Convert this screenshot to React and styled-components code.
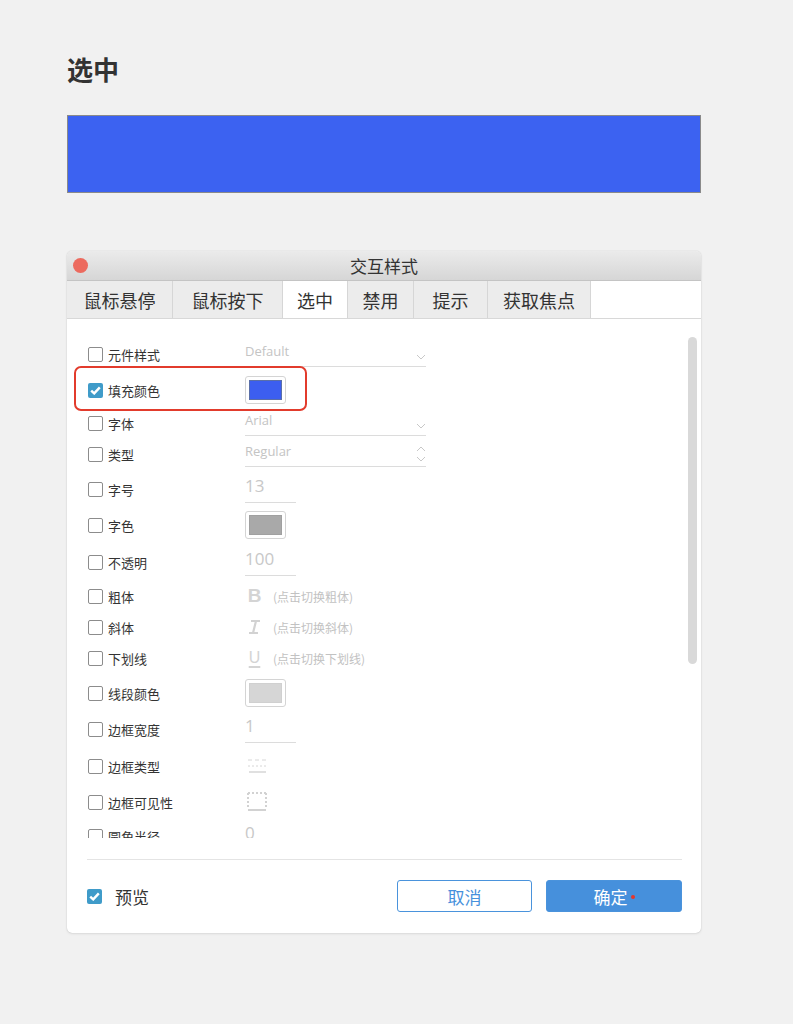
import styled, { createGlobalStyle } from 'styled-components';

const GlobalStyle = createGlobalStyle`
  html, body {
    margin: 0;
    padding: 0;
    background: #f1f1f1;
  }
  body {
    font-family: "Noto Sans CJK SC", "Noto Sans", "Liberation Sans", sans-serif;
    color: #333;
  }
`;

const Page = styled.div`
  width: 793px;
  min-height: 1024px;
  padding: 52px 0 0 67px;
  box-sizing: border-box;
`;

const Heading = styled.h1`
  margin: 0;
  font-size: 26px;
  line-height: 34px;
  font-weight: 700;
  color: #333;
`;

const PreviewBar = styled.div`
  width: 634px;
  height: 78px;
  margin-top: 29px;
  box-sizing: border-box;
  background: #3c62f1;
  border: 1px solid #8a8a8a;
`;

const Dialog = styled.div`
  width: 634px;
  margin-top: 58px;
  background: #fff;
  border-radius: 5px;
  box-shadow: 0 0 1px rgba(0, 0, 0, 0.25), 0 1px 3px rgba(0, 0, 0, 0.08);
  overflow: hidden;
`;

const TitleBar = styled.div`
  position: relative;
  height: 29px;
  display: flex;
  align-items: center;
  justify-content: center;
  background: linear-gradient(#ebebeb, #d6d6d6);
  border-bottom: 1px solid #c4c4c4;
  font-size: 17px;
  color: #333;
`;

const CloseDot = styled.span`
  position: absolute;
  left: 6px;
  top: 7px;
  width: 15px;
  height: 15px;
  border-radius: 50%;
  background: #ec6a5e;
`;

const Tabs = styled.div`
  display: flex;
  height: 38px;
  border-bottom: 1px solid #d8d8d8;
  box-sizing: border-box;
`;

const Tab = styled.div`
  width: ${(p) => p.w}px;
  display: flex;
  align-items: center;
  justify-content: center;
  box-sizing: border-box;
  border-right: 1px solid #d6d6d6;
  background: ${(p) => (p.active ? '#fff' : '#ececec')};
  font-size: 18px;
  color: #333;
`;

const Body = styled.div`
  position: relative;
  height: 519px;
  overflow: hidden;
  padding: 21px 0 0 21px;
  box-sizing: border-box;
`;

const ScrollThumb = styled.div`
  position: absolute;
  right: 4px;
  top: 18px;
  width: 9px;
  height: 327px;
  border-radius: 5px;
  background: #d9d9d9;
`;

/* each row: a 28px line, then the gap down to the next row */
const Row = styled.div`
  position: relative;
  height: 28px;
  margin-bottom: ${(p) => p.gap}px;
  display: flex;
  align-items: center;
`;

const Highlight = styled.div`
  position: absolute;
  left: -14px;
  top: -10px;
  width: 233px;
  height: 45px;
  box-sizing: border-box;
  border: 2px solid #e23b2c;
  border-radius: 7px;
`;

const Check = styled.span`
  width: 15px;
  height: 15px;
  box-sizing: border-box;
  border: ${(p) => (p.checked ? 'none' : '1px solid #8c8c8c')};
  border-radius: 2px;
  background: ${(p) => (p.checked ? '#3f9bc9' : '#fff')};
  display: inline-flex;
  align-items: center;
  justify-content: center;
  flex-shrink: 0;
`;

const Label = styled.span`
  width: 137px;
  margin-left: 5px;
  font-size: 13px;
  color: #333;
`;

const Select = styled.div`
  width: 181px;
  height: 22px;
  margin-top: 2px;
  border-bottom: 1px solid #dcdcdc;
  display: flex;
  align-items: flex-start;
  justify-content: space-between;
  font-family: "Open Sans", "Liberation Sans", sans-serif;
  font-size: 13px;
  line-height: 14px;
  color: #c4c4c4;
  svg {
    margin-top: ${(p) => (p.spin ? 0 : 10)}px;
  }
`;

const SpinArrows = styled.span`
  display: flex;
  flex-direction: column;
  gap: 4px;
  margin-top: 2px;
`;

const Swatch = styled.div`
  width: 41px;
  height: 28px;
  box-sizing: border-box;
  border: 1px solid #d4d4d4;
  border-radius: 3px;
  padding: 3px;
  background: #fff;
  div {
    width: 100%;
    height: 100%;
    box-sizing: border-box;
    background: ${(p) => p.color};
    border: 1px solid ${(p) => p.edge};
  }
`;

const NumInput = styled.div`
  width: 51px;
  height: 25px;
  margin-top: 2px;
  border-bottom: 1px solid #dcdcdc;
  font-family: "Open Sans", "Liberation Sans", sans-serif;
  font-size: 17px;
  line-height: 18px;
  color: #c8c8c8;
`;

const Toggle = styled.div`
  display: flex;
  align-items: center;
  gap: 9px;
  color: #cfcfcf;
`;

const Glyph = styled.span`
  width: 19px;
  display: inline-flex;
  justify-content: center;
  font-family: "Liberation Sans", sans-serif;
  font-size: 19px;
  font-weight: 700;
  line-height: 20px;
  color: #d4d4d4;
`;

const UnderGlyph = styled(Glyph)`
  font-size: 16px;
  font-weight: 400;
  text-decoration: underline;
  text-decoration-thickness: 2px;
  text-underline-offset: 3px;
`;

const Hint = styled.span`
  font-size: 12px;
  color: #c2c2c2;
`;

const Footer = styled.div`
  margin: 21px 19px 0 20px;
  padding: 20px 0 21px 0;
  border-top: 1px solid #e4e4e4;
  display: flex;
  align-items: center;
`;

const PreviewLabel = styled.span`
  margin-left: 13px;
  font-size: 17px;
  color: #333;
`;

const Buttons = styled.div`
  margin-left: auto;
  display: flex;
  gap: 14px;
`;

const Button = styled.button`
  width: ${(p) => (p.primary ? 136 : 135)}px;
  height: 32px;
  box-sizing: border-box;
  border: 1px solid #4a93dc;
  border-radius: 3px;
  background: ${(p) => (p.primary ? '#4690dc' : '#fff')};
  color: ${(p) => (p.primary ? '#fff' : '#4690dc')};
  font-family: inherit;
  font-size: 17px;
  display: flex;
  align-items: center;
  justify-content: center;
  padding: 0;
`;

const RedDot = styled.span`
  width: 4px;
  height: 4px;
  margin-left: 3px;
  margin-top: 2px;
  border-radius: 50%;
  background: #e8362a;
`;

function Tick() {
  return (
    <svg width="11" height="9" viewBox="0 0 11 9">
      <path d="M1.2 4.6 L4.2 7.4 L9.8 1.4" fill="none" stroke="#fff" strokeWidth="2.4" />
    </svg>
  );
}

function Chevron({ up }) {
  return (
    <svg width="10" height="6" viewBox="0 0 10 6">
      <path d={up ? 'M1 5 L5 1 L9 5' : 'M1 1 L5 5 L9 1'} fill="none" stroke="#c8c8c8" strokeWidth="1" />
    </svg>
  );
}

function ItalicIcon() {
  return (
    <svg width="19" height="18" viewBox="0 0 19 18">
      <path d="M6 3 H15 M4 15 H13 M11 3 L8 15" fill="none" stroke="#d2d2d2" strokeWidth="2.2" />
    </svg>
  );
}

function BorderTypeIcon() {
  return (
    <svg width="24" height="20" viewBox="0 0 24 20">
      <path d="M3 4 H7 M10 4 H14 M17 4 H21" stroke="#d6d6d6" strokeWidth="1" />
      <path d="M3 10 H21" stroke="#d6d6d6" strokeWidth="1" strokeDasharray="2 2" />
      <path d="M4 16 H21" stroke="#d6d6d6" strokeWidth="1.5" />
    </svg>
  );
}

function BorderVisIcon() {
  return (
    <svg width="24" height="22" viewBox="0 0 24 22">
      <path d="M3 2 H21 M3 2 V18 M21 2 V18" fill="none" stroke="#d2d2d2" strokeWidth="2" strokeDasharray="2 2" />
      <path d="M3 19 H21" stroke="#d2d2d2" strokeWidth="2" />
    </svg>
  );
}

// gap = distance to the next row's line
const rows = [
  { label: '元件样式', gap: 8, kind: 'select', value: 'Default' },
  { label: '填充颜色', gap: 5, kind: 'color', color: '#3c5ef0', edge: '#5a6fa8', checked: true },
  { label: '字体', gap: 3, kind: 'select', value: 'Arial' },
  { label: '类型', gap: 7, kind: 'spin', value: 'Regular' },
  { label: '字号', gap: 8, kind: 'input', value: '13' },
  { label: '字色', gap: 9, kind: 'color', color: '#a9a9a9', edge: '#a0a0a0' },
  { label: '不透明', gap: 6, kind: 'input', value: '100' },
  { label: '粗体', gap: 3, kind: 'bold', hint: '(点击切换粗体)' },
  { label: '斜体', gap: 3, kind: 'italic', hint: '(点击切换斜体)' },
  { label: '下划线', gap: 7, kind: 'under', hint: '(点击切换下划线)' },
  { label: '线段颜色', gap: 8, kind: 'color', color: '#d6d6d6', edge: '#d0d0d0' },
  { label: '边框宽度', gap: 9, kind: 'input', value: '1' },
  { label: '边框类型', gap: 8, kind: 'btype' },
  { label: '边框可见性', gap: 6, kind: 'bvis' },
  { label: '圆角半径', gap: 0, kind: 'input', value: '0' },
];

function Control({ row }) {
  switch (row.kind) {
    case 'select':
      return (
        <Select>
          <span>{row.value}</span>
          <Chevron />
        </Select>
      );
    case 'spin':
      return (
        <Select spin>
          <span>{row.value}</span>
          <SpinArrows>
            <Chevron up />
            <Chevron />
          </SpinArrows>
        </Select>
      );
    case 'color':
      return (
        <Swatch color={row.color} edge={row.edge}>
          <div />
        </Swatch>
      );
    case 'input':
      return <NumInput>{row.value}</NumInput>;
    case 'bold':
      return (
        <Toggle>
          <Glyph>B</Glyph>
          <Hint>{row.hint}</Hint>
        </Toggle>
      );
    case 'italic':
      return (
        <Toggle>
          <ItalicIcon />
          <Hint>{row.hint}</Hint>
        </Toggle>
      );
    case 'under':
      return (
        <Toggle>
          <UnderGlyph>U</UnderGlyph>
          <Hint>{row.hint}</Hint>
        </Toggle>
      );
    case 'btype':
      return <BorderTypeIcon />;
    case 'bvis':
      return <BorderVisIcon />;
    default:
      return null;
  }
}

const tabs = [
  { name: '鼠标悬停', w: 106 },
  { name: '鼠标按下', w: 110 },
  { name: '选中', w: 65, active: true },
  { name: '禁用', w: 66 },
  { name: '提示', w: 74 },
  { name: '获取焦点', w: 103 },
];

export default function App() {
  return (
    <>
      <GlobalStyle />
      <Page>
        <Heading>选中</Heading>
        <PreviewBar />
        <Dialog>
          <TitleBar>
            <CloseDot />
            交互样式
          </TitleBar>
          <Tabs>
            {tabs.map((t) => (
              <Tab key={t.name} w={t.w} active={t.active}>
                {t.name}
              </Tab>
            ))}
          </Tabs>
          <Body>
            {rows.map((r) => (
              <Row key={r.label} gap={r.gap}>
                {r.checked && <Highlight />}
                <Check checked={r.checked}>{r.checked && <Tick />}</Check>
                <Label>{r.label}</Label>
                <Control row={r} />
              </Row>
            ))}
            <ScrollThumb />
          </Body>
          <Footer>
            <Check checked>
              <Tick />
            </Check>
            <PreviewLabel>预览</PreviewLabel>
            <Buttons>
              <Button>取消</Button>
              <Button primary>
                确定
                <RedDot />
              </Button>
            </Buttons>
          </Footer>
        </Dialog>
      </Page>
    </>
  );
}
